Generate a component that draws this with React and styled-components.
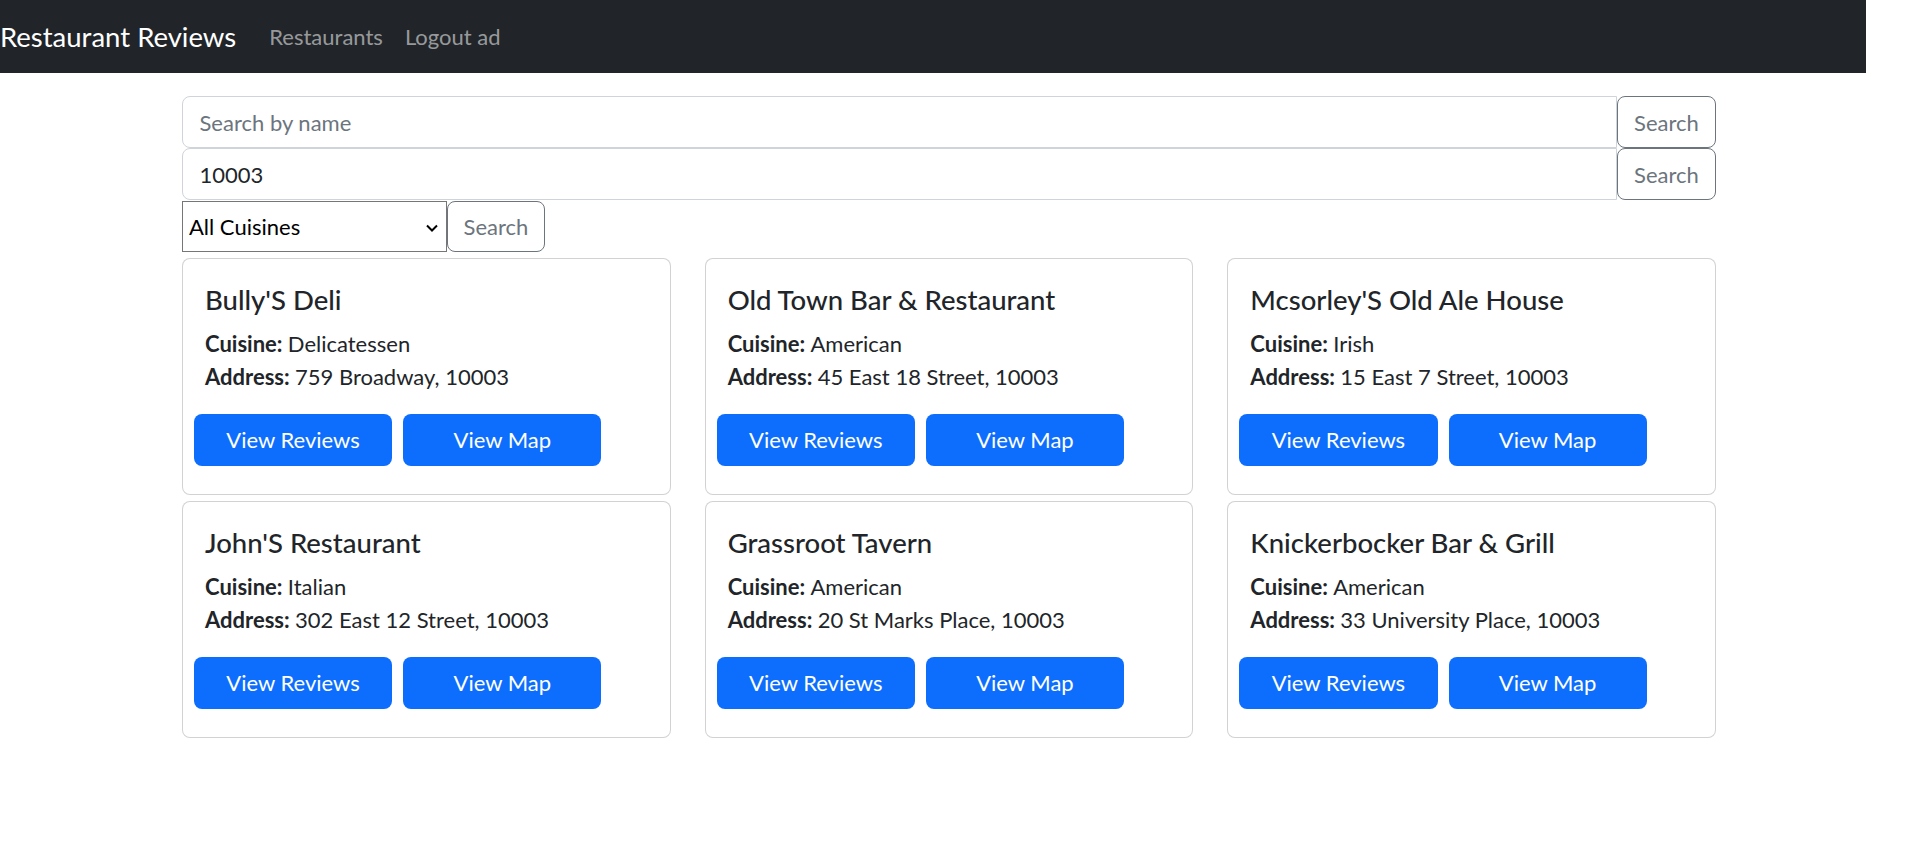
import React from "react";
import styled, { createGlobalStyle } from "styled-components";

const GlobalStyle = createGlobalStyle`
  html, body {
    margin: 0;
    padding: 0;
    background: #fff;
  }
  body {
    font-family: Lato, "Noto Sans", "Liberation Sans", sans-serif;
    font-size: 22px;
    line-height: 1.5;
    color: #212529;
  }
  * { box-sizing: border-box; }
`

const Page = styled.div`
  width: 1898px;
`

const Navbar = styled.nav`
  width: 1866px;
  height: 73px;
  background: #212529;
  display: flex;
  align-items: center;
  padding: 11px 0;
`

const Brand = styled.a`
  color: #fff;
  font-size: 27.5px;
  line-height: 1.5;
  padding: 4px 0;
  margin-right: 22px;
  text-decoration: none;
  white-space: nowrap;
`

const NavLink = styled.a`
  color: rgba(255, 255, 255, 0.55);
  font-size: 22px;
  padding: 11px 11px;
  text-decoration: none;
  white-space: nowrap;
`

const Container = styled.div`
  width: 1534px;
  margin: 23px auto 0;
`

const InputGroup = styled.div`
  display: flex;
  width: 100%;
  margin-top: ${p => p.$offset || 0}px;
`

const TextInput = styled.input`
  flex: 1;
  height: 52px;
  font-family: inherit;
  font-size: 22px;
  color: #212529;
  padding: 8px 16.5px;
  border: 1px solid #ced4da;
  border-radius: 8px 0 0 8px;
  outline: none;
  &::placeholder {
    color: #6c757d;
  }
`

const OutlineButton = styled.button`
  width: ${p => p.$width || 99}px;
  height: ${p => p.$height || 52}px;
  font-family: inherit;
  font-size: 22px;
  color: #6c757d;
  background: #fff;
  border: 1px solid #6c757d;
  border-radius: 8px;
  padding: 0;
  cursor: pointer;
`

const SelectWrap = styled.div`
  position: relative;
  width: 265px;
  height: 51px;
`

const Select = styled.select`
  appearance: none;
  width: 100%;
  height: 100%;
  font-family: inherit;
  font-size: 22px;
  color: #000;
  background: #fff;
  border: 1px solid #767676;
  border-radius: 0;
  padding: 0 30px 0 6px;
  outline: none;
`

const Chevron = styled.svg`
  position: absolute;
  right: 9px;
  top: 23px;
  pointer-events: none;
`

const CardGrid = styled.div`
  display: grid;
  grid-template-columns: repeat(3, 1fr);
  column-gap: 34px;
  row-gap: 6px;
  padding-top: 5.5px;
`

const Card = styled.div`
  border: 1px solid rgba(0, 0, 0, 0.175);
  border-radius: 8px;
  padding: 24.5px 22px 22.5px;
  background: #fff;
`

const CardTitle = styled.h5`
  margin: 0 0 11px;
  font-size: 27.5px;
  font-weight: 500;
  line-height: 1.2;
  color: #212529;
`

const CardText = styled.p`
  margin: 0 0 20.5px;
  font-size: 22px;
  line-height: 33px;
  strong { font-weight: 700; }
`

const ButtonRow = styled.div`
  display: flex;
  margin: 0 -16.5px;
`

const PrimaryButton = styled.a`
  width: 41.667%;
  height: 52px;
  margin: 0 5.5px 5.5px;
  display: flex;
  align-items: center;
  justify-content: center;
  background: #0d6efd;
  color: #fff;
  font-size: 22px;
  border-radius: 8px;
  text-decoration: none;
  cursor: pointer;
`

const restaurants = [
  { name: "Bully'S Deli", cuisine: "Delicatessen", address: "759 Broadway, 10003" },
  { name: "Old Town Bar & Restaurant", cuisine: "American", address: "45 East 18 Street, 10003" },
  { name: "Mcsorley'S Old Ale House", cuisine: "Irish", address: "15 East 7 Street, 10003" },
  { name: "John'S Restaurant", cuisine: "Italian", address: "302 East 12 Street, 10003" },
  { name: "Grassroot Tavern", cuisine: "American", address: "20 St Marks Place, 10003" },
  { name: "Knickerbocker Bar & Grill", cuisine: "American", address: "33 University Place, 10003" },
];

export default function App() {
  return (
    <Page>
      <GlobalStyle />
      <Navbar>
        <Brand href="#">Restaurant Reviews</Brand>
        <NavLink href="#">Restaurants</NavLink>
        <NavLink href="#">Logout ad</NavLink>
      </Navbar>
      <Container>
        <InputGroup>
          <TextInput placeholder="Search by name" />
          <OutlineButton>Search</OutlineButton>
        </InputGroup>
        <InputGroup>
          <TextInput defaultValue="10003" />
          <OutlineButton>Search</OutlineButton>
        </InputGroup>
        <InputGroup $offset={1}>
          <SelectWrap>
            <Select defaultValue="All Cuisines">
              <option>All Cuisines</option>
            </Select>
            <Chevron width="12" height="8" viewBox="0 0 12 8">
              <polyline points="1,1.5 6,6.5 11,1.5" fill="none" stroke="#000" strokeWidth="2" />
            </Chevron>
          </SelectWrap>
          <OutlineButton $width={98} $height={51}>Search</OutlineButton>
        </InputGroup>
        <CardGrid>
          {restaurants.map(r => (
            <Card key={r.name}>
              <CardTitle>{r.name}</CardTitle>
              <CardText>
                <strong>Cuisine: </strong>{r.cuisine}<br />
                <strong>Address: </strong>{r.address}
              </CardText>
              <ButtonRow>
                <PrimaryButton>View Reviews</PrimaryButton>
                <PrimaryButton>View Map</PrimaryButton>
              </ButtonRow>
            </Card>
          ))}
        </CardGrid>
      </Container>
    </Page>
  );
}
